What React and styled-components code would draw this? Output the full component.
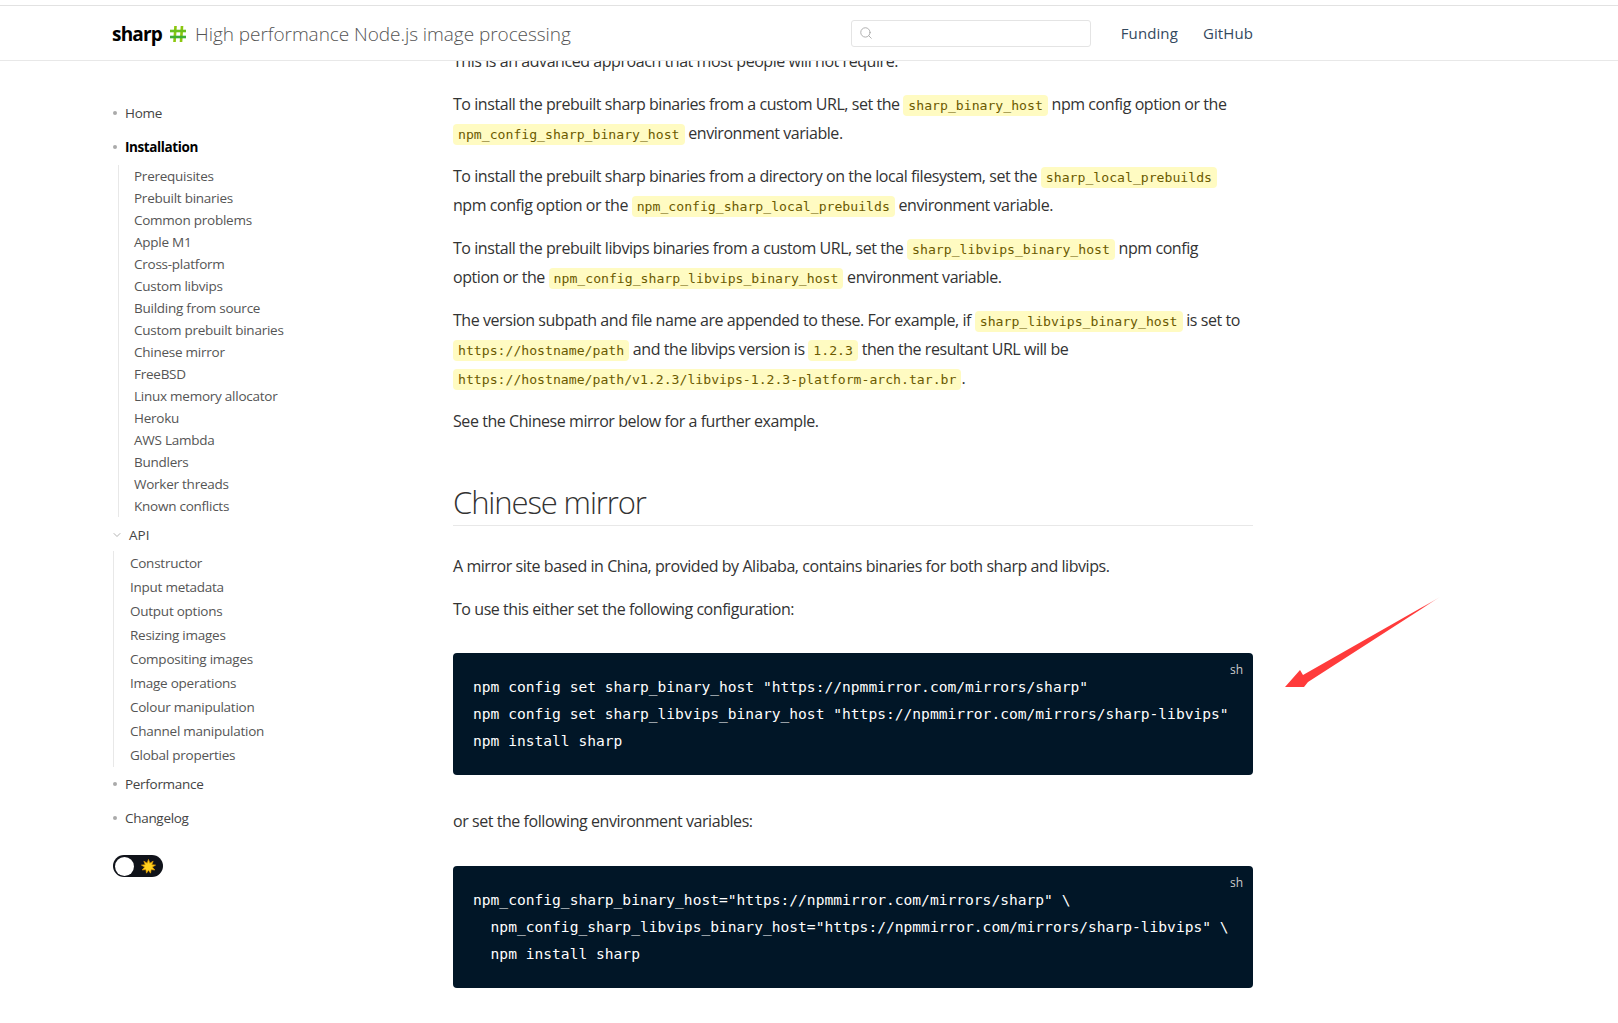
import React from "react";
import styled, { createGlobalStyle } from "styled-components";
import { Search, ChevronDown } from "lucide-react";

const GlobalStyle = createGlobalStyle`
  html, body {
    margin: 0;
    padding: 0;
    height: 100%;
    overflow: hidden;
    background: #fff;
  }
  body {
    font-family: "Open Sans", "Noto Sans", sans-serif;
    color: #333;
  }
`;

const installLinks = [
  "Prerequisites",
  "Prebuilt binaries",
  "Common problems",
  "Apple M1",
  "Cross-platform",
  "Custom libvips",
  "Building from source",
  "Custom prebuilt binaries",
  "Chinese mirror",
  "FreeBSD",
  "Linux memory allocator",
  "Heroku",
  "AWS Lambda",
  "Bundlers",
  "Worker threads",
  "Known conflicts",
];

const apiLinks = [
  "Constructor",
  "Input metadata",
  "Output options",
  "Resizing images",
  "Compositing images",
  "Image operations",
  "Colour manipulation",
  "Channel manipulation",
  "Global properties",
];

const Logo = () => (
  <LogoSvg viewBox="0 0 18 18">
    <path d="M6.5 1 L5.5 17" stroke="#8cc70f" strokeWidth="2.6" fill="none" />
    <path d="M13 1 L12 17" stroke="#8cc70f" strokeWidth="2.6" fill="none" />
    <path d="M1 6 H17" stroke="#6cc01e" strokeWidth="2.6" fill="none" />
    <path d="M1 12 H17" stroke="#3fae34" strokeWidth="2.6" fill="none" />
  </LogoSvg>
);

const Sun = () => (
  <svg width="15" height="15" viewBox="0 0 18 18">
    <polygon
      fill="#ffd21f"
      stroke="#e8a000"
      strokeWidth="0.8"
      points="9,0.5 10.6,5 14.6,2.6 12.9,6.9 17.5,7.3 13.6,9.7 16.6,13.2 12.2,12.6 11.4,17 9,13.4 6.6,17 5.8,12.6 1.4,13.2 4.4,9.7 0.5,7.3 5.1,6.9 3.4,2.6 7.4,5"
    />
  </svg>
);

const App = () => {
  return (
    <>
      <GlobalStyle />
      <Header>
        <HeaderInner>
          <Brand>
            <BrandName>sharp</BrandName>
            <Logo />
            <Tagline>High performance Node.js image processing</Tagline>
          </Brand>
          <HeaderRight>
            <SearchBox>
              <Search size={14} color="#aaa" strokeWidth={1.6} />
            </SearchBox>
            <HeaderLink>Funding</HeaderLink>
            <HeaderLink>GitHub</HeaderLink>
          </HeaderRight>
        </HeaderInner>
      </Header>

      <Layout>
        <Sidebar>
          <TopItem>Home</TopItem>
          <TopItem $active>Installation</TopItem>
          <SubList>
            {installLinks.map((name) => (
              <SubLink key={name}>{name}</SubLink>
            ))}
          </SubList>
          <ApiTitle>
            <ChevronDown size={12} color="#999" strokeWidth={1.5} />
            API
          </ApiTitle>
          <ApiList>
            {apiLinks.map((name) => (
              <ApiLink key={name}>{name}</ApiLink>
            ))}
          </ApiList>
          <TopItem>Performance</TopItem>
          <TopItem>Changelog</TopItem>
          <Toggle>
            <Knob />
            <Sun />
          </Toggle>
        </Sidebar>

        <Content>
          <Para>This is an advanced approach that most people will not require.</Para>
          <Para>
            To install the prebuilt sharp binaries from a custom URL, set the{" "}
            <Code>sharp_binary_host</Code> npm config option or the{" "}
            <Code>npm_config_sharp_binary_host</Code> environment variable.
          </Para>
          <Para>
            To install the prebuilt sharp binaries from a directory on the local filesystem, set the{" "}
            <Code>sharp_local_prebuilds</Code> npm config option or the{" "}
            <Code>npm_config_sharp_local_prebuilds</Code> environment variable.
          </Para>
          <Para>
            To install the prebuilt libvips binaries from a custom URL, set the{" "}
            <Code>sharp_libvips_binary_host</Code> npm config
            <br />
            option or the <Code>npm_config_sharp_libvips_binary_host</Code> environment variable.
          </Para>
          <Para>
            The version subpath and file name are appended to these. For example, if{" "}
            <Code>sharp_libvips_binary_host</Code> is set to <Code>https://hostname/path</Code> and
            the libvips version is <Code>1.2.3</Code> then the resultant URL will be{" "}
            <Code>https://hostname/path/v1.2.3/libvips-1.2.3-platform-arch.tar.br</Code>.
          </Para>
          <Para>See the Chinese mirror below for a further example.</Para>

          <Heading>Chinese mirror</Heading>

          <Para>
            A mirror site based in China, provided by Alibaba, contains binaries for both sharp and
            libvips.
          </Para>
          <Para>To use this either set the following configuration:</Para>

          <CodeBlock>
            <Lang>sh</Lang>
            <pre>{`npm config set sharp_binary_host "https://npmmirror.com/mirrors/sharp"
npm config set sharp_libvips_binary_host "https://npmmirror.com/mirrors/sharp-libvips"
npm install sharp`}</pre>
          </CodeBlock>

          <Para>or set the following environment variables:</Para>

          <CodeBlock>
            <Lang>sh</Lang>
            <pre>{`npm_config_sharp_binary_host="https://npmmirror.com/mirrors/sharp" \\
  npm_config_sharp_libvips_binary_host="https://npmmirror.com/mirrors/sharp-libvips" \\
  npm install sharp`}</pre>
          </CodeBlock>
        </Content>
      </Layout>

      <Arrow viewBox="0 0 170 100">
        <defs>
          <linearGradient id="fade" x1="1" y1="0" x2="0" y2="1">
            <stop offset="0" stopColor="#ff3b3b" stopOpacity="0.2" />
            <stop offset="0.12" stopColor="#ff3b3b" />
          </linearGradient>
        </defs>
        <polygon
          fill="url(#fade)"
          points="160,2 23,80 20,75 5,92 24,92 28,87"
        />
      </Arrow>
    </>
  );
};

export default App;

const Header = styled.header`
  position: fixed;
  top: 5px;
  left: 0;
  right: 0;
  height: 54px;
  background: #fff;
  border-top: 1px solid #e2e2e2;
  border-bottom: 1px solid #e8e8e8;
  z-index: 10;
`;

const HeaderInner = styled.div`
  display: flex;
  justify-content: space-between;
  align-items: center;
  width: 1140px;
  height: 100%;
  margin-left: 113px;
`;

const Brand = styled.div`
  display: flex;
  align-items: center;
  margin-left: -1px;
  padding-top: 2px;
`;

const BrandName = styled.span`
  font-size: 19px;
  font-weight: 700;
  letter-spacing: -0.8px;
  color: #000;
`;

const LogoSvg = styled.svg`
  width: 18px;
  height: 18px;
  margin: 0 8px 0 7px;
`;

const Tagline = styled.span`
  font-size: 19px;
  font-weight: 300;
  letter-spacing: -0.05px;
  color: #555;
`;

const HeaderRight = styled.div`
  display: flex;
  align-items: center;
`;

const SearchBox = styled.div`
  display: flex;
  align-items: center;
  box-sizing: border-box;
  width: 240px;
  height: 27px;
  padding-left: 7px;
  margin-right: 30px;
  border: 1px solid #e4e4e4;
  border-radius: 3px;
`;

const HeaderLink = styled.a`
  font-size: 15px;
  letter-spacing: 0.1px;
  color: #34495e;
  & + & {
    margin-left: 25px;
  }
`;

const Layout = styled.div`
  display: flex;
  padding-left: 113px;
`;

const Sidebar = styled.nav`
  display: flex;
  flex-direction: column;
  width: 340px;
  padding-top: 103px;
  flex-shrink: 0;
`;

const TopItem = styled.a`
  position: relative;
  font-size: 13.5px;
  line-height: 20px;
  letter-spacing: ${(p) => (p.$active ? "-0.4px" : "-0.3px")};
  padding-left: 12px;
  margin-bottom: ${(p) => (p.$active ? "8px" : "14px")};
  font-weight: ${(p) => (p.$active ? 700 : 400)};
  color: ${(p) => (p.$active ? "#000" : "#444")};
  &::before {
    content: "";
    position: absolute;
    left: 0;
    top: 8px;
    width: 4px;
    height: 4px;
    border-radius: 50%;
    background: #aaa;
  }
`;

const SubList = styled.div`
  display: flex;
  flex-direction: column;
  margin-left: 5px;
  border-left: 1px solid #e8e8e8;
  padding-left: 15px;
`;

const SubLink = styled.a`
  font-size: 13.5px;
  line-height: 22px;
  letter-spacing: -0.25px;
  color: #555;
`;

const ApiTitle = styled.div`
  display: flex;
  align-items: center;
  gap: 6px;
  margin: 8px 0 0 -2px;
  font-size: 13.5px;
  line-height: 20px;
  color: #444;
`;

const ApiList = styled.div`
  display: flex;
  flex-direction: column;
  margin-top: 6px;
  margin-bottom: 7px;
  border-left: 1px solid #e8e8e8;
  padding-left: 16px;
`;

const ApiLink = styled.a`
  font-size: 13.5px;
  line-height: 24px;
  letter-spacing: -0.25px;
  color: #555;
`;

const Toggle = styled.div`
  display: flex;
  align-items: center;
  justify-content: space-between;
  box-sizing: border-box;
  width: 50px;
  height: 22px;
  margin-top: 13px;
  padding: 0 7px 0 2px;
  border-radius: 11px;
  background: #10131a;
`;

const Knob = styled.span`
  width: 19px;
  height: 19px;
  border-radius: 50%;
  background: #fff;
`;

const Content = styled.main`
  width: 800px;
  padding-top: 47px;
`;

const Para = styled.p`
  margin: 0 0 14.4px;
  font-size: 16px;
  line-height: 28.8px;
  letter-spacing: -0.44px;
  color: #333;
`;

const Code = styled.code`
  font-family: "DejaVu Sans Mono", "Liberation Mono", monospace;
  font-size: 13.15px;
  line-height: 1;
  letter-spacing: 0;
  padding: 3px 5px;
  border-radius: 4px;
  background: #fffbc2;
  color: #6b5a00;
`;

const Heading = styled.h2`
  margin: 45px 0 26px;
  padding-bottom: 2px;
  font-size: 31px;
  line-height: 42px;
  font-weight: 300;
  letter-spacing: -1.1px;
  color: #333;
  border-bottom: 1px solid #e8e8e8;
`;

const CodeBlock = styled.div`
  position: relative;
  margin: 29.5px 0 32px;
  padding: 20px 20px 21px;
  border-radius: 4px;
  background: #011627;
  color: #fff;
  pre {
    margin: 0;
    font-family: "DejaVu Sans Mono", "Liberation Mono", monospace;
    font-size: 14.6px;
    line-height: 27px;
  }
`;

const Lang = styled.span`
  position: absolute;
  top: 8px;
  right: 10px;
  font-size: 12px;
  color: #ccc;
`;

const Arrow = styled.svg`
  position: fixed;
  left: 1280px;
  top: 595px;
  width: 170px;
  height: 100px;
`;
